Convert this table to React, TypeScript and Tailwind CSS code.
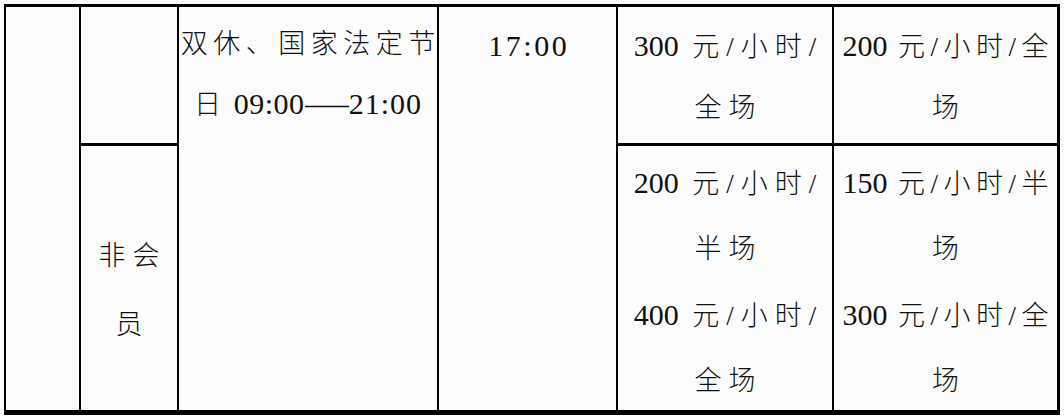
import React from "react";

const cell = "border-black";

function Num({ children }: { children: React.ReactNode }) {
  return <span className="text-[30px]">{children}</span>;
}

function Price({ num, unit, tight }: { num: string; unit: string; tight?: boolean }) {
  return (
    <div className="whitespace-nowrap">
      <Num>{num} </Num>
      <span
        className={
          tight
            ? "ml-[3px] tracking-[5.5px] mr-[-5.5px]"
            : "ml-[6px] tracking-[7px] mr-[-7px]"
        }
      >
        {unit}
      </span>
    </div>
  );
}

export default function App() {
  return (
    <div className="w-[1064px] h-[416px] bg-[#fcfcfd] pl-1 pt-1 text-[#111] text-[27px] font-light font-['Liberation_Serif','Noto_Sans_CJK_SC',serif]">
      <div className="grid h-[411px] w-[1056px] grid-cols-[75px_98px_260px_179px_216px_1fr] grid-rows-[139px_1fr] border-t-[3px] border-l-2 border-r-[3px] border-b-[5px] border-black">
        {/* 第一列：空 */}
        <div className={`row-span-2 border-r-2 ${cell}`} />

        {/* 会员类别（上：空） */}
        <div className={`border-r-2 border-b-[3px] ${cell}`} />

        {/* 开放时间 */}
        <div className={`row-span-2 border-r-2 ${cell} pt-[7px] leading-[60px] text-center`}>
          <div className="whitespace-nowrap tracking-[5.5px] mr-[-5.5px]">双休、国家法定节</div>
          <div className="whitespace-nowrap">
            <span className="tracking-[3px]">日 </span>
            <Num>
              <span className="tracking-[0.5px]">09:00</span>
              <span className="inline-block scale-x-[1.45] mx-[7px]">—</span>
              <span className="tracking-[1px]">21:00</span>
            </Num>
          </div>
        </div>

        {/* 分界时间 */}
        <div className={`row-span-2 border-r-2 ${cell} pt-2 leading-[61px] text-center`}>
          <Num>
            <span className="tracking-[2.5px] mr-[-2.5px]">17:00</span>
          </Num>
        </div>

        {/* 会员价（上） */}
        <div className={`border-r-2 border-b-[3px] ${cell} pt-2 leading-[61px] text-center`}>
          <Price num="300" unit="元/小时/" />
          <div className="tracking-[7px] mr-[-7px]">全场</div>
        </div>

        {/* 另一价格（上） */}
        <div className={`border-b-[3px] ${cell} pt-2 leading-[61px] text-center`}>
          <Price num="200" unit="元/小时/全" tight />
          <div>场</div>
        </div>

        {/* 非会员 */}
        <div className={`border-r-2 ${cell} pt-[76px] leading-[69px] text-center`}>
          <div className="tracking-[7px] mr-[-7px]">非会</div>
          <div>员</div>
        </div>

        {/* 非会员价 */}
        <div className={`border-r-2 ${cell} pt-1 leading-[65px] text-center`}>
          <Price num="200" unit="元/小时/" />
          <div className="tracking-[7px] mr-[-7px]">半场</div>
          <Price num="400" unit="元/小时/" />
          <div className="tracking-[7px] mr-[-7px]">全场</div>
        </div>

        <div className="pt-1 leading-[65px] text-center">
          <Price num="150" unit="元/小时/半" tight />
          <div>场</div>
          <Price num="300" unit="元/小时/全" tight />
          <div>场</div>
        </div>
      </div>
    </div>
  );
}
